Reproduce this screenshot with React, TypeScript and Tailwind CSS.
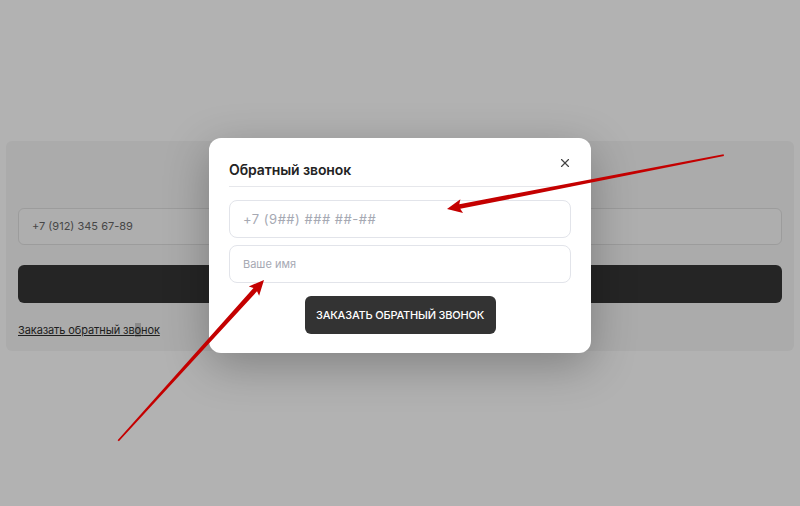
import React from "react";
import { X } from "lucide-react";

const font = { fontFamily: "Inter, 'Noto Sans', sans-serif" };

const Arrows = () => {
  return (
    <svg
      className="absolute inset-0 pointer-events-none"
      width="800"
      height="506"
      viewBox="0 0 800 506"
    >
      {/* arrow pointing at the phone field */}
      <g transform="translate(447 209) rotate(-11.03)">
        <polygon
          points="0,0 15,-7 13,-2.4 282,-0.9 282,0.9 13,2.4 15,7"
          fill="#c40000"
        />
      </g>
      {/* arrow pointing at the name field */}
      <g transform="translate(264 280) rotate(132.2)">
        <polygon
          points="0,0 15,-7 13,-2.4 217,-0.9 217,0.9 13,2.4 15,7"
          fill="#c40000"
        />
      </g>
    </svg>
  );
};

const CallbackModal = () => {
  return (
    <div className="w-[382px] bg-white rounded-[12px] px-5 pt-5 pb-[19px] shadow-[0_12px_45px_rgba(0,0,0,0.28)]">
      <div className="flex justify-between items-start border-b border-[#e6e7eb] pb-[4px]">
        <h3 className="text-[14px] leading-[24px] font-semibold text-[#232323] tracking-[-0.1px]">
          Обратный звонок
        </h3>
        <button className="mt-[-2px] mr-[-1px] text-[#444]">
          <X size={14} strokeWidth={2} />
        </button>
      </div>
      <div className="flex flex-col gap-[7px] mt-[13px]">
        <input
          className="h-[38px] w-full rounded-[8px] border border-[#e2e4ea] px-[13px] text-[13px] tracking-[0.5px] outline-none placeholder:text-[#a6a9b3]"
          placeholder="+7 (9##) ### ##-##"
          style={font}
        />
        <input
          className="h-[38px] w-full rounded-[8px] border border-[#e2e4ea] px-[13px] text-[11px] outline-none placeholder:text-[#a6a9b3]"
          placeholder="Ваше имя"
          style={font}
        />
      </div>
      <div className="flex justify-center mt-[13px]">
        <button className="h-[38px] w-[191px] rounded-[6px] bg-[#333333] text-white text-[11px] font-medium tracking-[-0.2px]">
          ЗАКАЗАТЬ ОБРАТНЫЙ ЗВОНОК
        </button>
      </div>
    </div>
  );
};

export default function App() {
  return (
    <div className="relative w-full h-[506px] bg-white overflow-hidden" style={font}>
      <div className="pt-[141px] px-[6px]">
        <div className="bg-[#f5f5f5] rounded-[6px] px-3 pt-[67px] pb-[11px]">
          <div className="h-[37px] rounded-[6px] border border-[#e0e0e0] bg-[#fafafa] flex items-center px-[13px] text-[11px] text-[#666]">
            +7 (912) 345 67-89
          </div>
          <div className="h-[38px] mt-[20px] rounded-[6px] bg-[#363636]"></div>
          <a className="inline-block mt-[18px] text-[11px] leading-[18px] text-[#2e2e2e] underline tracking-[-0.1px]">
            Заказать обратный зв<span className="bg-[#c8c8c8]">о</span>нок
          </a>
        </div>
      </div>

      <div className="absolute inset-0 bg-black/30 flex justify-center items-start pt-[138px]">
        <CallbackModal />
      </div>

      <Arrows />
    </div>
  );
}
